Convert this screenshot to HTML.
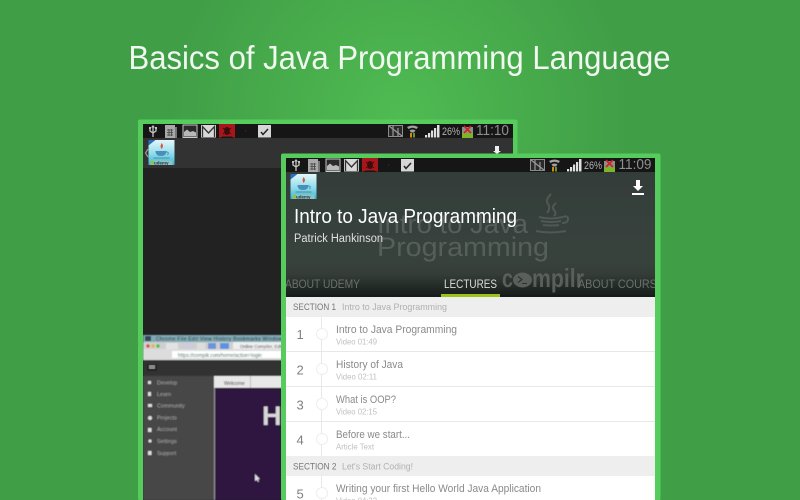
<!DOCTYPE html>
<html><head><meta charset="utf-8"><style>
html,body{margin:0;padding:0;width:800px;height:500px;overflow:hidden;background:#409e47}
svg{display:block}
text{font-family:"Liberation Sans",sans-serif}
</style></head><body>
<svg width="800" height="500" viewBox="0 0 800 500" xmlns="http://www.w3.org/2000/svg">
<defs>
<radialGradient id="bg" gradientUnits="userSpaceOnUse" cx="400" cy="115" r="230">
<stop offset="0" stop-color="#4fbb52"/><stop offset=".55" stop-color="#47ab4b"/><stop offset="1" stop-color="#409e47"/>
</radialGradient>
<linearGradient id="hdr" x1="0" y1="0" x2="0" y2="1">
<stop offset="0" stop-color="#333d39"/><stop offset=".7" stop-color="#39433e"/><stop offset=".82" stop-color="#343c38"/><stop offset="1" stop-color="#161c19"/>
</linearGradient>
<linearGradient id="ic" x1="0" y1="0" x2="0" y2="1">
<stop offset="0" stop-color="#e4f6fa"/><stop offset=".55" stop-color="#8fdcec"/><stop offset="1" stop-color="#33b4d0"/>
</linearGradient>
<clipPath id="backc"><rect x="143" y="124" width="370" height="376"/></clipPath>
<clipPath id="frontc"><rect x="286" y="158" width="369" height="342"/></clipPath>
<filter id="b0" x="0" y="0" width="100%" height="100%"><feGaussianBlur stdDeviation=".3"/></filter>
<filter id="b2" x="-5%" y="-5%" width="110%" height="110%"><feGaussianBlur stdDeviation=".55"/></filter>
<g id="status">
<path d="M10 2v11M7 3.500v3.500l3 2 3-2V3.500" fill="none" stroke="#c4c4c4" stroke-width="1.300"/><path d="M8 3.500l2-2.500 2 2.500zM6 3h2v2H6zM12 3h2v2h-2z" fill="#c4c4c4"/>
<rect x="22" y="1" width="10" height="13" fill="#a8a8a8"/><path d="M24 6h6M24 8.500h6M24 11h6M26 5v7M28.500 5v7" stroke="#444" stroke-width=".8"/><rect x="32" y="3" width="2" height="11" fill="#777"/>
<rect x="40" y="1" width="14" height="12.500" fill="#2a2a2a" stroke="#c8c8c8" stroke-width="1"/><path d="M41 12V8l3-2.500 3 2.500 3-1 3 1.500V12.500H41z" fill="#b8b8b8"/>
<rect x="58" y="1" width="15" height="12.500" fill="#d8d8d8"/><path d="M59.500 13V2.500L65.500 9l6-6.500V13" fill="none" stroke="#333" stroke-width="1.300"/>
<path d="M76 0h16v14l-4-1.500h-8L76 14z" fill="#a8141a"/><ellipse cx="84" cy="7" rx="2.800" ry="4" fill="#3a0a0c"/><path d="M80 4l8 6M88 4l-8 6" stroke="#3a0a0c" stroke-width="1"/>
<rect x="102" y="6.500" width="1.200" height="1.200" fill="#7a1518"/>
<rect x="115" y="1" width="13" height="12.500" fill="#d6d6d6"/><path d="M118 8l2 2.500 5-5.500" fill="none" stroke="#222" stroke-width="1.500"/>
</g>
<g id="rstatus">
<rect x="0.500" y="1.500" width="14" height="11" fill="#2a2a2a" stroke="#8c8c8c" stroke-width="1"/><path d="M1 2l13 10M5 2v10M10 4v8" stroke="#999" stroke-width="1.200"/>
<path d="M19 3q5.500-3 11 0l-1.500 2q-4-2.500-8 0zM21.500 6.500q3-2 6 0L26 8.500h-3z" fill="#a0a0a0"/>
<path d="M23 9v4.500" stroke="#e09a1a" stroke-width="1.800"/><path d="M26 9v4.500" stroke="#7aa02a" stroke-width="1.800"/>
<g fill="#e0e0e0"><rect x="37" y="11" width="2.200" height="2.500"/><rect x="40" y="9" width="2.200" height="4.500"/><rect x="43" y="6.500" width="2.200" height="7"/><rect x="46" y="4" width="2.200" height="9.500"/><rect x="49" y="1" width="2.500" height="12.500"/></g>
<rect x="74" y="3" width="11" height="6" fill="#8d8d8d"/><rect x="74" y="9" width="11" height="5" fill="#7db52c"/><path d="M76 2l7 7M83 2l-7 7" stroke="#d02222" stroke-width="1.600"/>
</g>
<g id="thumb">
<rect width="26" height="25" fill="url(#ic)"/>
<path d="M0 0h7L0 5.500z" fill="#2a6fc0"/>
<path d="M13 3q3 3 0 6q-1-2-1-3z" fill="#d8533a"/>
<path d="M7 11h11q0 5-5.500 5T7 11z" fill="#4a8fb8"/>
<path d="M18 12q3 0 1 3" fill="none" stroke="#4a8fb8" stroke-width="1"/>
<rect x="5" y="17.500" width="16" height="1" fill="#5a8a9a"/>
<rect x="2" y="20.500" width="22" height="4.500" fill="#8fc4c4"/>
<rect x="2.500" y="21" width="3" height="3.500" fill="#8cc63f"/>
</g>
</defs>

<rect width="800" height="500" fill="url(#bg)"/>
<text x="128.500" y="69" font-size="33" fill="#fff" textLength="542" lengthAdjust="spacingAndGlyphs" opacity=".92">Basics of Java Programming Language</text>

<!-- back phone -->
<rect x="138" y="119.500" width="379.500" height="381" rx="2" fill="#55cc5b"/>
<g clip-path="url(#backc)">
<g filter="url(#b0)">
<rect x="143" y="124" width="370" height="376" fill="#232323"/>
<rect x="143" y="124" width="370" height="14" fill="#141414"/>
<rect x="143" y="138" width="370" height="30" fill="#323232"/>
<use href="#status" x="143" y="124"/>
<use href="#rstatus" x="388" y="124"/>
<text x="442" y="135" font-size="11" fill="#b4b4b4" textLength="18" lengthAdjust="spacingAndGlyphs">26%</text>
<text x="476" y="135" font-size="15" fill="#8f8f8f" textLength="33" lengthAdjust="spacingAndGlyphs">11:10</text>
<path d="M148 149l-2.500 4 2.500 4" fill="none" stroke="#999" stroke-width="1.200"/>
<use href="#thumb" x="148.500" y="140"/>
<text x="154" y="164.500" font-size="4.500" font-weight="bold" fill="#234">udemy</text>
<path d="M495 146h4v5h2l-4 3-4-3h2z" fill="#eee"/>
<!-- embedded browser -->
<g filter="url(#b2)">
<rect x="143" y="335" width="370" height="7" fill="#7fa9b2"/>
<rect x="145" y="336" width="6" height="5" fill="#345"/>
<text x="156" y="340.500" font-size="5" fill="#223" textLength="126" lengthAdjust="spacing">Chrome  File  Edit  View  History  Bookmarks  Window</text>
<rect x="143" y="342" width="370" height="7" fill="#cfcfcf"/>
<circle cx="148" cy="346" r="1.700" fill="#d44"/><circle cx="153" cy="346" r="1.700" fill="#db3"/><circle cx="158" cy="346" r="1.700" fill="#5b4"/>
<rect x="166" y="343" width="12" height="6" fill="#e2e2e2"/><rect x="183" y="343" width="10" height="6" fill="#ccd"/><rect x="197" y="343" width="8" height="6" fill="#ddd"/><rect x="208" y="343" width="8" height="6" fill="#6a96d8"/><rect x="220" y="343" width="9" height="6" fill="#5b93e0"/><rect x="233" y="342" width="50" height="7" fill="#eee"/>
<text x="240" y="348" font-size="4.500" fill="#444">Online Compiler, Editor</text>
<rect x="143" y="349" width="370" height="11" fill="#dcdcdc"/>
<rect x="172" y="351" width="111" height="7" fill="#fff"/>
<text x="178" y="357" font-size="5" fill="#264">https://compilr.com/home/action=login</text>
<rect x="143" y="360" width="370" height="16" fill="#333"/>
<rect x="147" y="364" width="10" height="7" fill="#222"/><path d="M149 366h6M149 368h6" stroke="#bbb"/>
<rect x="143" y="376" width="71" height="124" fill="#464646"/>
<rect x="214" y="376" width="70" height="12" fill="#e8e8e8"/>
<rect x="250" y="376" width="1" height="12" fill="#bbb"/>
<text x="224" y="385" font-size="5" fill="#333">Welcome</text>
<rect x="215" y="389" width="70" height="111" fill="#2d1440"/>
<rect x="214" y="388" width="1" height="112" fill="#999"/>
<text x="262" y="425" font-size="27" font-weight="bold" fill="#d8d8d8">H</text>
<path d="M255 474v7l2-1 1 2 1-.500-1-2 2-.500z" fill="#ddd"/>
<g font-size="5.500" fill="#a4a4a4">
<text x="157" y="384.500">Develop</text><text x="157" y="396">Learn</text><text x="157" y="407.500">Community</text><text x="157" y="419.500">Projects</text><text x="157" y="431">Account</text><text x="157" y="443">Settings</text><text x="157" y="455">Support</text>
</g>
<g fill="#ddd">
<rect x="148" y="381" width="3" height="3"/><rect x="148" y="392" width="3" height="4"/><rect x="148" y="404" width="4" height="3"/><circle cx="150" cy="418" r="2"/><rect x="148" y="428" width="3.500" height="4"/><circle cx="150" cy="441" r="1.600"/><rect x="148" y="451" width="3.500" height="4"/>
</g>
</g>
</g>
</g>

<!-- front phone -->
<rect x="281" y="153.500" width="379.500" height="347" rx="2" fill="#55cc5b"/>
<g clip-path="url(#frontc)">
<g filter="url(#b0)">
<rect x="286" y="172" width="369" height="125" fill="url(#hdr)"/>
<rect x="286" y="158" width="369" height="14" fill="#121413"/>
<use href="#status" x="286" y="158"/>
<use href="#rstatus" x="530" y="158"/>
<text x="584" y="169" font-size="11" fill="#b4b4b4" textLength="18" lengthAdjust="spacingAndGlyphs">26%</text>
<text x="618.500" y="169" font-size="15" fill="#8f8f8f" textLength="33" lengthAdjust="spacingAndGlyphs">11:09</text>
<use href="#thumb" x="290.500" y="174"/>
<text x="296" y="198.500" font-size="4.500" font-weight="bold" fill="#234">udemy</text>
<path d="M636 180h4v6h3l-5 5-5-5h3zM632 193h12v2h-12z" fill="#fff"/>
<!-- watermark -->
<g fill="#565e5a">
<text x="377" y="233" font-size="27" textLength="151" lengthAdjust="spacingAndGlyphs">Intro to Java</text>
<text x="377" y="256" font-size="27" textLength="172" lengthAdjust="spacingAndGlyphs">Programming</text>
</g>
<g fill="none" stroke="#505955" stroke-width="2">
<path d="M551 194q-6 6-3 10t-1 9M556 203q-5 4-2 7t0 6"/>
<path d="M539 217q12 3 24 0M541 221q10 2 20 0M543 225q8 1 16 0"/>
<path d="M563 217q5-2 5 2t-6 4"/>
<path d="M536 231q14 3 30 0"/>
</g>
<g fill="#5a5f5c" font-size="26" font-weight="bold">
<text x="502" y="287" textLength="11" lengthAdjust="spacingAndGlyphs">c</text>
<text x="532" y="287" textLength="52" lengthAdjust="spacingAndGlyphs">mpilr</text>
</g>
<ellipse cx="522.500" cy="280" rx="9.500" ry="7.500" fill="#5a5f5c"/>
<path d="M518 276.500l4 3-4 3M522 283.500h5" fill="none" stroke="#2c312e" stroke-width="1.100"/>
<!-- header text -->
<text x="294" y="223" font-size="20" fill="#fff" textLength="223" lengthAdjust="spacingAndGlyphs">Intro to Java Programming</text>
<text x="294" y="242" font-size="11.500" fill="#e0e0e0" textLength="89" lengthAdjust="spacingAndGlyphs">Patrick Hankinson</text>
<text x="285" y="288" font-size="12" fill="#6c716e" textLength="75" lengthAdjust="spacingAndGlyphs">ABOUT UDEMY</text>
<text x="444" y="288" font-size="12" fill="#dcdcdc" textLength="53" lengthAdjust="spacingAndGlyphs">LECTURES</text>
<text x="578" y="288" font-size="12" fill="#6c716e" textLength="86" lengthAdjust="spacingAndGlyphs">ABOUT COURSE</text>
<rect x="441" y="294" width="59" height="3" fill="#9ac31c"/>
<!-- list -->
<rect x="286" y="297" width="369" height="203" fill="#fff"/>
<rect x="286" y="297" width="369" height="20" fill="#eee"/>
<rect x="286" y="456" width="369" height="20" fill="#eee"/>
<g fill="#e8e8e8">
<rect x="286" y="351" width="369" height="1"/><rect x="286" y="386" width="369" height="1"/><rect x="286" y="421" width="369" height="1"/>
<rect x="321" y="317" width="1" height="139"/><rect x="321" y="476" width="1" height="24"/>
</g>
<g fill="#fff" stroke="#eee" stroke-width="1">
<circle cx="322" cy="334" r="5.500"/><circle cx="322" cy="369" r="5.500"/><circle cx="322" cy="404" r="5.500"/><circle cx="322" cy="439" r="5.500"/><circle cx="322" cy="493" r="5.500"/>
</g>
<g font-size="9.500" fill="#777">
<text x="293" y="310" textLength="43" lengthAdjust="spacingAndGlyphs">SECTION 1</text>
<text x="293" y="469.500" textLength="43.500" lengthAdjust="spacingAndGlyphs">SECTION 2</text>
</g>
<g font-size="9.500" fill="#b0b0b0">
<text x="342" y="310" textLength="105" lengthAdjust="spacingAndGlyphs">Intro to Java Programming</text>
<text x="342" y="469.500" textLength="71" lengthAdjust="spacingAndGlyphs">Let's Start Coding!</text>
</g>
<g font-size="13" fill="#808080">
<text x="296.500" y="339">1</text><text x="296.500" y="374.500">2</text><text x="296.500" y="409.500">3</text><text x="296.500" y="444.500">4</text><text x="296.500" y="498.500">5</text>
</g>
<g font-size="11" fill="#8a8a8a">
<text x="336" y="333" textLength="121" lengthAdjust="spacingAndGlyphs">Intro to Java Programming</text>
<text x="336" y="368" textLength="67" lengthAdjust="spacingAndGlyphs">History of Java</text>
<text x="336" y="403" textLength="60" lengthAdjust="spacingAndGlyphs">What is OOP?</text>
<text x="336" y="438" textLength="74" lengthAdjust="spacingAndGlyphs">Before we start...</text>
<text x="336" y="492" textLength="205" lengthAdjust="spacingAndGlyphs">Writing your first Hello World Java Application</text>
</g>
<g font-size="8.500" fill="#c0c0c0">
<text x="336" y="344.500" textLength="41" lengthAdjust="spacingAndGlyphs">Video 01:49</text>
<text x="336" y="379.500" textLength="41" lengthAdjust="spacingAndGlyphs">Video 02:11</text>
<text x="336" y="414.500" textLength="41" lengthAdjust="spacingAndGlyphs">Video 02:15</text>
<text x="336" y="449.500" textLength="38" lengthAdjust="spacingAndGlyphs">Article Text</text>
<text x="336" y="503.500" textLength="41" lengthAdjust="spacingAndGlyphs">Video 04:22</text>
</g>
</g>
</g>
</svg>
</body></html>
